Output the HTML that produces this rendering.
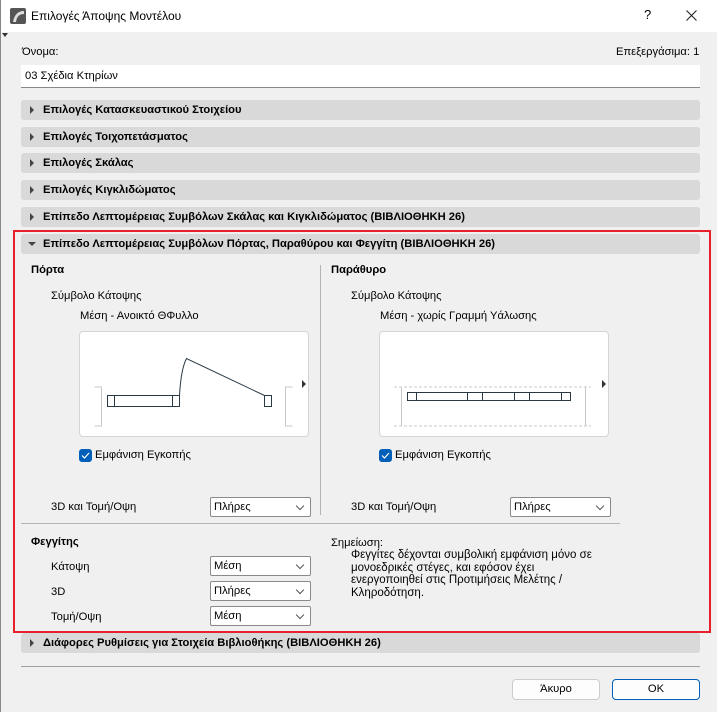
<!DOCTYPE html>
<html><head><meta charset="utf-8"><style>
*{box-sizing:border-box;margin:0;padding:0}
body{width:717px;height:712px;background:#f0f0f0;font-family:"Liberation Sans","DejaVu Sans",sans-serif;font-size:11.2px;color:#000;position:relative;overflow:hidden}
.a{position:absolute;white-space:nowrap}
.hdr{position:absolute;left:21px;width:679px;height:20px;background:#d9d9d9;border-radius:3px;font-weight:bold;line-height:20px;padding-left:22px}
.hdr:before{content:"";position:absolute;left:9px;top:6px;border-left:4px solid #444;border-top:4px solid transparent;border-bottom:4px solid transparent}
.hdr.open:before{left:7px;top:8px;border-top:4px solid #444;border-left:4px solid transparent;border-right:4px solid transparent;border-bottom:0}
.sel{position:absolute;width:101px;height:20px;background:#fff;border:1px solid #8a8a8a;border-radius:2px;line-height:18px;padding-left:3px}
.sel:after{content:"";position:absolute;right:7px;top:5px;width:5px;height:5px;border-right:1px solid #555;border-bottom:1px solid #555;transform:rotate(45deg)}
.box{position:absolute;width:230px;height:106px;background:#fff;border:1px solid #d4d4d4;border-radius:4px}
.cb{position:absolute;width:13px;height:13px;background:#005fb8;border-radius:3px}
.btn{position:absolute;height:21px;background:#fdfdfd;border:1px solid #ccc;border-radius:4px;text-align:center;line-height:19px}
.tri{position:absolute;border-left:4px solid #333;border-top:4px solid transparent;border-bottom:4px solid transparent}
</style></head><body>
<div class="a" style="left:0;top:0;width:717px;height:32px;background:#fff"></div>
<div class="a" style="left:0;top:0;width:1px;height:712px;background:#888"></div>
<svg class="a" style="left:10px;top:8px" width="16" height="16"><rect width="16" height="16" rx="2" fill="#555"/><path d="M3 14 Q5 3 14 3 L14 6 Q7 6 6 14Z" fill="#ddd"/></svg>
<div class="a" style="left:31px;top:9px;font-size:12px">Επιλογές Άποψης Μοντέλου</div>
<div class="a" style="left:644px;top:7px;font-size:13px">?</div>
<svg class="a" style="left:686px;top:10px" width="11" height="11"><path d="M0.5 0.5L10.5 10.5M10.5 0.5L0.5 10.5" stroke="#222" stroke-width="1.1"/></svg>
<div class="tri" style="left:2px;top:33px;border-left:3px solid transparent;border-right:3px solid transparent;border-top:4px solid #333;border-bottom:0"></div>

<div class="a" style="left:22px;top:46px">Όνομα:</div>
<div class="a" style="left:616px;top:46px">Επεξεργάσιμα: 1</div>
<div class="a" style="left:21px;top:65px;width:679px;height:23px;background:#fff;border-bottom:1px solid #888;padding:5px 4px">03 Σχέδια Κτηρίων</div>

<div class="hdr" style="top:100px">Επιλογές Κατασκευαστικού Στοιχείου</div>
<div class="hdr" style="top:127px">Επιλογές Τοιχοπετάσματος</div>
<div class="hdr" style="top:153px">Επιλογές Σκάλας</div>
<div class="hdr" style="top:180px">Επιλογές Κιγκλιδώματος</div>
<div class="hdr" style="top:207px">Επίπεδο Λεπτομέρειας Συμβόλων Σκάλας και Κιγκλιδώματος (ΒΙΒΛΙΟΘΗΚΗ 26)</div>
<div class="hdr open" style="top:234px">Επίπεδο Λεπτομέρειας Συμβόλων Πόρτας, Παραθύρου και Φεγγίτη (ΒΙΒΛΙΟΘΗΚΗ 26)</div>

<div class="a" style="left:31px;top:264px;font-weight:bold">Πόρτα</div>
<div class="a" style="left:51px;top:290px">Σύμβολο Κάτοψης</div>
<div class="a" style="left:80px;top:310px">Μέση - Ανοικτό ΘΦυλλο</div>
<div class="box" style="left:79px;top:331px"></div>
<svg class="a" style="left:79px;top:331px" width="240" height="106">
<path d="M15.5 56H22.5V95H15.5M213.5 56H206.5V95H213.5" fill="none" stroke="#c8c8c8"/>
<rect x="28.5" y="64.5" width="72" height="11" fill="none" stroke="#2a3a45"/>
<path d="M35.5 64.5V75.5M93.5 64.5V75.5" stroke="#2a3a45"/>
<rect x="185.5" y="64.5" width="7" height="11" fill="none" stroke="#2a3a45"/>
<path d="M100.5 64.5Q102 38 107.5 27.5L185.5 64.5" fill="none" stroke="#2a3a45"/>
</svg>
<div class="tri" style="left:302px;top:380px"></div>
<div class="cb" style="left:79px;top:449px"></div>
<svg class="a" style="left:81px;top:452px" width="9" height="7"><path d="M1 3.5L3.5 6L8 1" stroke="#fff" fill="none" stroke-width="1.2"/></svg>
<div class="a" style="left:95px;top:449px">Εμφάνιση Εγκοπής</div>
<div class="a" style="left:51px;top:501px">3D και Τομή/Οψη</div>
<div class="sel" style="left:210px;top:497px">Πλήρες</div>

<div class="a" style="left:320px;top:265px;width:1px;height:250px;background:#b4b4b4"></div>

<div class="a" style="left:331px;top:264px;font-weight:bold">Παράθυρο</div>
<div class="a" style="left:351px;top:290px">Σύμβολο Κάτοψης</div>
<div class="a" style="left:380px;top:310px">Μέση - χωρίς Γραμμή Υάλωσης</div>
<div class="box" style="left:379px;top:331px"></div>
<svg class="a" style="left:379px;top:331px" width="240" height="106">
<path d="M15 56H212M15 95H212" stroke="#c8c8c8" stroke-dasharray="3 2"/>
<path d="M22.5 56V95M206.5 56V95" stroke="#c8c8c8"/>
<rect x="28.5" y="61.5" width="163" height="8" fill="none" stroke="#2a3a45"/>
<path d="M37.5 61.5V69.5M88.5 61.5V69.5M103.5 61.5V69.5M135.5 61.5V69.5M150.5 61.5V69.5M182.5 61.5V69.5" stroke="#2a3a45"/>
</svg>
<div class="tri" style="left:602px;top:380px"></div>
<div class="cb" style="left:379px;top:449px"></div>
<svg class="a" style="left:381px;top:452px" width="9" height="7"><path d="M1 3.5L3.5 6L8 1" stroke="#fff" fill="none" stroke-width="1.2"/></svg>
<div class="a" style="left:395px;top:449px">Εμφάνιση Εγκοπής</div>
<div class="a" style="left:351px;top:501px">3D και Τομή/Οψη</div>
<div class="sel" style="left:510px;top:497px">Πλήρες</div>

<div class="a" style="left:21px;top:523px;width:599px;height:1px;background:#b4b4b4"></div>

<div class="a" style="left:31px;top:536px;font-weight:bold">Φεγγίτης</div>
<div class="a" style="left:51px;top:561px">Κάτοψη</div>
<div class="a" style="left:51px;top:586px">3D</div>
<div class="a" style="left:51px;top:611px">Τομή/Οψη</div>
<div class="sel" style="left:210px;top:556px">Μέση</div>
<div class="sel" style="left:210px;top:581px">Πλήρες</div>
<div class="sel" style="left:210px;top:606px">Μέση</div>
<div class="a" style="left:331px;top:537px">Σημείωση:</div>
<div class="a" style="left:351px;top:549px;line-height:12.5px;font-size:11.5px">Φεγγίτες δέχονται συμβολική εμφάνιση μόνο σε<br>μονοεδρικές στέγες, και εφόσον έχει<br>ενεργοποιηθεί στις Προτιμήσεις Μελέτης /<br>Κληροδότηση.</div>

<div class="a" style="left:13px;top:230px;width:698px;height:403px;border:2px solid #e8202a"></div>

<div class="hdr" style="top:633px">Διάφορες Ρυθμίσεις για Στοιχεία Βιβλιοθήκης (ΒΙΒΛΙΟΘΗΚΗ 26)</div>
<div class="a" style="left:21px;top:666px;width:679px;height:1px;background:#a0a0a0"></div>
<div class="btn" style="left:512px;top:679px;width:88px">Άκυρο</div>
<div class="btn" style="left:612px;top:679px;width:88px;border-color:#005fb8">OK</div>
</body></html>
